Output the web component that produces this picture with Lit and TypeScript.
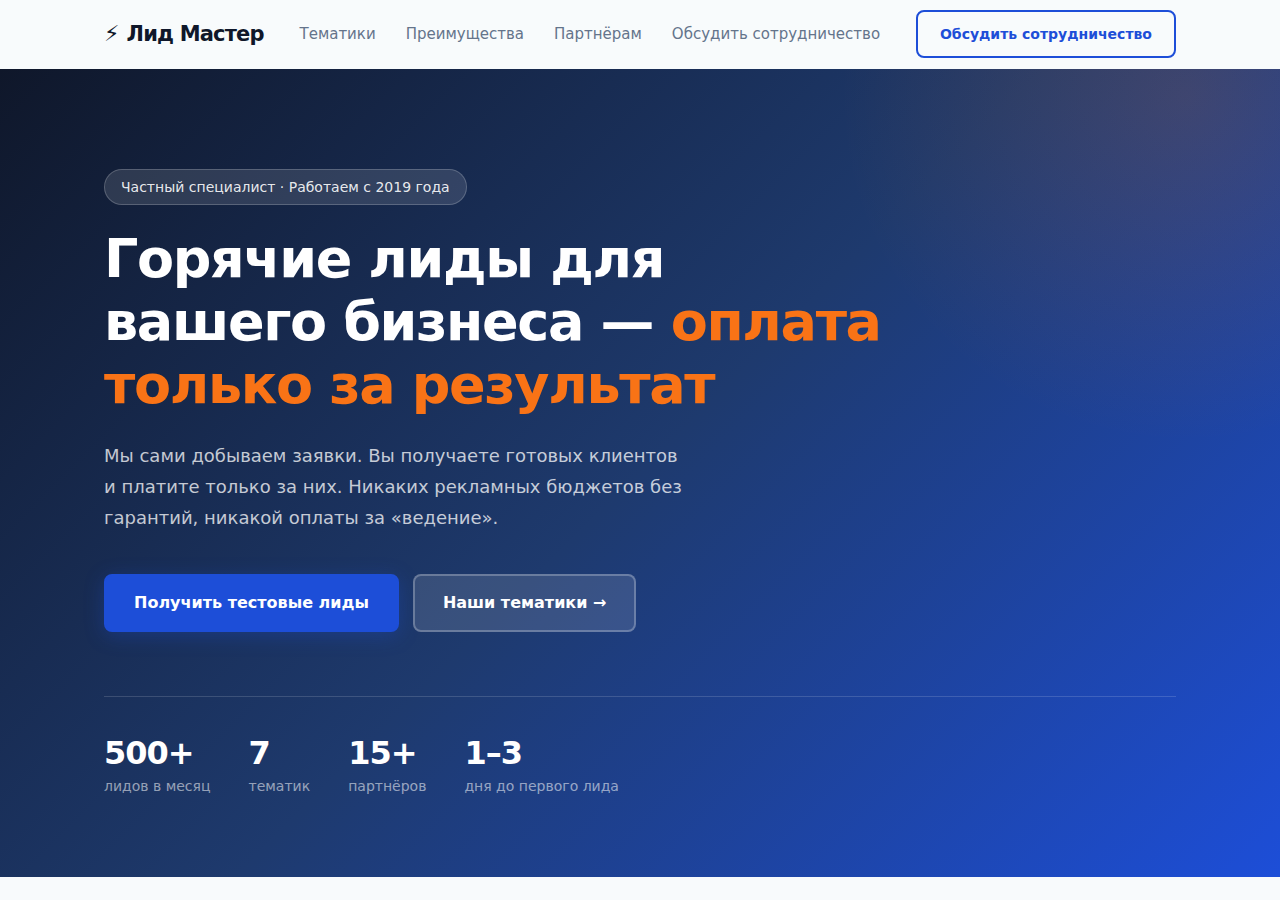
import { LitElement, html, css } from "lit";
import { customElement } from "lit/decorators.js";

const links = [
  { href: "#niches", label: "Тематики" },
  { href: "#benefits", label: "Преимущества" },
  { href: "#partners", label: "Партнёрам" },
  { href: "#contact", label: "Обсудить сотрудничество" },
];

const stats = [
  { value: "500+", label: "лидов в месяц" },
  { value: "7", label: "тематик" },
  { value: "15+", label: "партнёров" },
  { value: "1–3", label: "дня до первого лида" },
];

@customElement("app-root")
export class AppRoot extends LitElement {
  static styles = css`
    :host {
      display: block;
      min-height: 100vh;
      background: #f8fafc;
      color: #0f172a;
      font-family: "DejaVu Sans", sans-serif;
      font-size: 16px;
      line-height: 26px;
    }
    *, *::before { box-sizing: border-box; }
    a { color: inherit; text-decoration: none; }
    .container {
      max-width: 1120px;
      margin: 0 auto;
      padding: 0 24px;
    }
    .header {
      border-bottom: 1px solid #f8fbfc;
      background: #f8fbfc;
    }
    .bar {
      display: flex;
      align-items: center;
      justify-content: space-between;
      min-height: 68px;
      white-space: nowrap;
    }
    .logo {
      display: flex;
      gap: 8px;
      font-size: 21px;
      font-weight: 800;
      letter-spacing: -0.04em;
    }
    .bolt { font-size: 22px; }
    .nav {
      display: flex;
      gap: 30px;
      color: #64748b;
      font-size: 15px;
    }
    .btn {
      display: inline-flex;
      align-items: center;
      border: 2px solid transparent;
      border-radius: 8px;
      font-weight: 700;
    }
    .btn-outline {
      padding: 9px 22px;
      border-color: #1d4ed8;
      color: #1d4ed8;
      font-size: 14px;
    }
    .hero {
      position: relative;
      overflow: hidden;
      padding: 100px 0 80px;
      background: linear-gradient(135deg, #0f172a 0%, #1e3a6e 50%, #1d4ed8 100%);
      color: #fff;
    }
    .hero::before {
      content: "";
      position: absolute;
      top: -40%;
      right: -20%;
      width: 700px;
      height: 700px;
      background: radial-gradient(circle, rgba(249, 115, 22, 0.15) 0%, transparent 70%);
    }
    .content { position: relative; }
    .badge {
      width: fit-content;
      margin-bottom: 22px;
      padding: 6px 16px;
      border: 1px solid rgba(255, 255, 255, 0.2);
      border-radius: 100px;
      background: rgba(255, 255, 255, 0.12);
      color: rgba(255, 255, 255, 0.9);
      font-size: 14px;
      line-height: 22px;
    }
    h1 {
      max-width: 790px;
      margin: 0 0 24px;
      font-size: 54px;
      font-weight: 800;
      line-height: 63px;
      letter-spacing: -0.025em;
    }
    .accent { color: #f97316; }
    .lead {
      max-width: 590px;
      margin: 0 0 41px;
      color: rgba(255, 255, 255, 0.75);
      font-size: 18px;
      line-height: 31px;
    }
    .actions {
      display: flex;
      flex-wrap: wrap;
      gap: 14px;
      margin-bottom: 64px;
    }
    .btn-primary {
      padding: 14px 28px;
      border-color: #1d4ed8;
      background: #1d4ed8;
      box-shadow: 0 4px 20px rgba(29, 78, 216, 0.3);
    }
    .btn-ghost {
      padding: 14px 28px;
      border-color: rgba(255, 255, 255, 0.25);
      background: rgba(255, 255, 255, 0.12);
    }
    .stats {
      display: flex;
      flex-wrap: wrap;
      gap: 38px;
      margin: 0;
      padding-top: 40px;
      border-top: 1px solid rgba(255, 255, 255, 0.15);
    }
    .stat { display: flex; flex-direction: column-reverse; gap: 6px; }
    .value {
      margin: 0;
      font-size: 32px;
      font-weight: 800;
      line-height: 32px;
      letter-spacing: -1px;
    }
    .label {
      color: rgba(255, 255, 255, 0.55);
      font-size: 14px;
      line-height: 22px;
    }
  `;

  render() {
    return html`
      <header class="header">
        <div class="container bar">
          <a class="logo" href="#"><span class="bolt">⚡</span><span>Лид Мастер</span></a>
          <nav class="nav">
            ${links.map((l) => html`<a href=${l.href}>${l.label}</a>`)}
          </nav>
          <a class="btn btn-outline" href="#contact">Обсудить сотрудничество</a>
        </div>
      </header>
      <main class="hero">
        <div class="container content">
          <div class="badge">Частный специалист · Работаем с 2019 года</div>
          <h1>Горячие лиды для вашего бизнеса — <span class="accent">оплата только за результат</span></h1>
          <p class="lead">
            Мы сами добываем заявки. Вы получаете готовых клиентов и платите только за них.
            Никаких рекламных бюджетов без гарантий, никакой оплаты за «ведение».
          </p>
          <div class="actions">
            <a class="btn btn-primary" href="#contact">Получить тестовые лиды</a>
            <a class="btn btn-ghost" href="#niches">Наши тематики →</a>
          </div>
          <dl class="stats">
            ${stats.map(
              (s) => html`<div class="stat">
                <dt class="label">${s.label}</dt>
                <dd class="value">${s.value}</dd>
              </div>`
            )}
          </dl>
        </div>
      </main>
    `;
  }
}
